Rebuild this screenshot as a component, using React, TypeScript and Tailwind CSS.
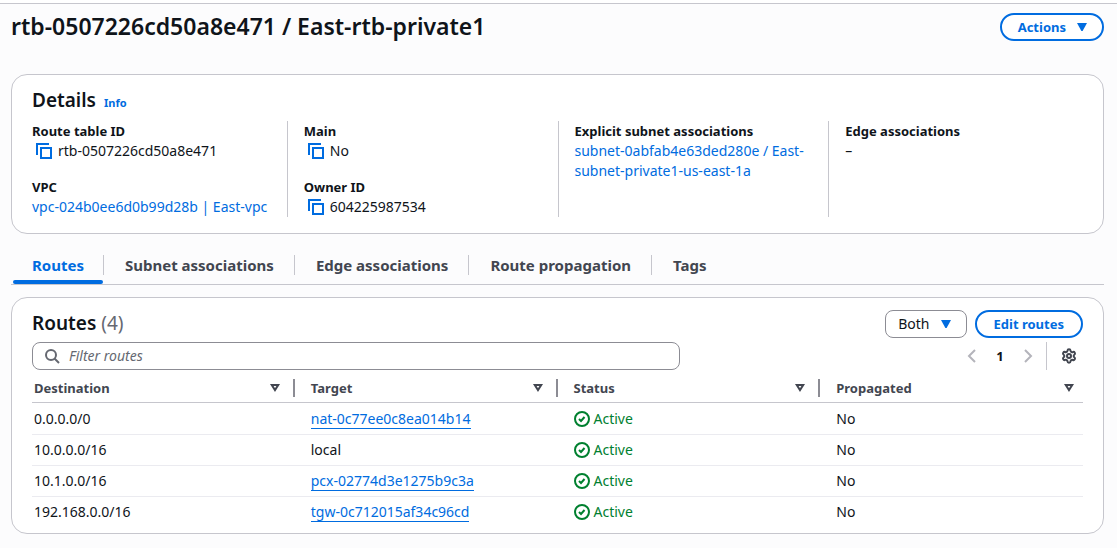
import React from "react";
import { Settings } from "lucide-react";

const detailLink = "text-[#006ce0] hover:underline";

function CopyIcon() {
  return (
    <svg viewBox="0 0 16 16" className="h-4 w-4 fill-none stroke-[#006ce0] stroke-2" aria-hidden="true">
      <path d="M15 5H5v10h10V5Z" />
      <path d="M13 1H1v11" />
    </svg>
  );
}

function CaretDown() {
  return (
    <svg viewBox="0 0 16 16" className="h-4 w-4 fill-[#006ce0]" aria-hidden="true">
      <path d="M3 4h10l-4.4 8H7.4L3 4Z" />
    </svg>
  );
}

function SortIcon() {
  return (
    <svg viewBox="0 0 16 16" className="block h-4 w-4 fill-none stroke-[#424650] stroke-2" aria-hidden="true">
      <path d="M4.8 5h6.4L8 10.1 4.8 5Z" />
    </svg>
  );
}

function StatusIcon() {
  return (
    <svg viewBox="0 0 16 16" className="h-4 w-4 fill-none stroke-[#00802f] stroke-2" aria-hidden="true">
      <circle cx="8" cy="8" r="7" />
      <path d="m5 8 2 2 3.521-4" />
    </svg>
  );
}

function SearchIcon() {
  return (
    <svg viewBox="0 0 16 16" className="h-4 w-4 shrink-0 fill-none stroke-[#656871] stroke-2" aria-hidden="true">
      <circle cx="7" cy="7" r="5" />
      <path d="m15 15-4.5-4.5" />
    </svg>
  );
}

function AngleIcon({ d }: { d: string }) {
  return (
    <svg viewBox="0 0 16 16" className="h-4 w-4 fill-none stroke-[#b4b4bb] stroke-2" aria-hidden="true">
      <path d={d} />
    </svg>
  );
}

function Copyable({ value }: { value: string }) {
  return (
    <span className="flex items-center gap-1.5 pl-1">
      <button type="button" aria-label={`Copy ${value}`}>
        <CopyIcon />
      </button>
      {value}
    </span>
  );
}

function Field({ label, children }: { label: string; children: React.ReactNode }) {
  return (
    <div>
      <dt className="text-[13px] leading-5 font-bold">{label}</dt>
      <dd>{children}</dd>
    </div>
  );
}

const tabs = ["Routes", "Subnet associations", "Edge associations", "Route propagation", "Tags"];
const columns = ["Destination", "Target", "Status", "Propagated"];
const routes = [
  { destination: "0.0.0.0/0", target: "nat-0c77ee0c8ea014b14", link: true },
  { destination: "10.0.0.0/16", target: "local", link: false },
  { destination: "10.1.0.0/16", target: "pcx-02774d3e1275b9c3a", link: true },
  { destination: "192.168.0.0/16", target: "tgw-0c712015af34c96cd", link: true },
];

export default function App() {
  return (
    <div className="min-h-screen bg-[#fcfcfd] font-['Noto_Sans',sans-serif] text-[14px] leading-5 text-[#0f141a]">
      <div className="h-1 border-b border-[#c6c6cd] bg-white" />
      <main className="pr-[13px] pb-3.5 pl-[11px]">
        <header className="flex items-start justify-between pt-2 pb-px">
          <h1 className="text-[23px] leading-7 font-semibold">rtb-0507226cd50a8e471 / East-rtb-private1</h1>
          <button type="button" className="mt-px flex h-7 items-center gap-2 rounded-full border-2 border-[#006ce0] bg-white pr-3 pl-4 text-[13px] font-bold text-[#006ce0]">
            Actions
            <CaretDown />
          </button>
        </header>

        <section className="mt-8 rounded-2xl border border-[#c6c6cd] bg-white px-5 pt-3.5 pb-4">
          <div className="flex items-baseline gap-2">
            <h2 className="text-[19px] leading-[22px] font-semibold">Details</h2>
            <a href="#info" className="text-[11px] leading-4 font-bold text-[#006ce0]">Info</a>
          </div>
          <dl className="-mx-4 mt-2.5 grid grid-cols-4">
            <div className="flex flex-col gap-4 px-4">
              <Field label="Route table ID"><Copyable value="rtb-0507226cd50a8e471" /></Field>
              <Field label="VPC"><a href="#vpc" className={detailLink}>vpc-024b0ee6d0b99d28b | East-vpc</a></Field>
            </div>
            <div className="flex flex-col gap-4 border-l border-[#c6c6cd] px-4">
              <Field label="Main"><Copyable value="No" /></Field>
              <Field label="Owner ID"><Copyable value="604225987534" /></Field>
            </div>
            <div className="border-l border-[#c6c6cd] px-4">
              <Field label="Explicit subnet associations">
                <a href="#subnet" className={detailLink}>subnet-0abfab4e63ded280e / East-subnet-private1-us-east-1a</a>
              </Field>
            </div>
            <div className="border-l border-[#c6c6cd] px-4">
              <Field label="Edge associations">–</Field>
            </div>
          </dl>
        </section>

        <nav role="tablist" className="mt-3 flex border-b border-[#c6c6cd] pl-0.5 text-[15px]">
          {tabs.map((tab, i) => (
            <button
              key={tab}
              type="button"
              role="tab"
              aria-selected={i === 0}
              className={
                i === 0
                  ? "relative flex h-[38px] items-center text-[#006ce0] after:absolute after:right-px after:bottom-0 after:left-0 after:h-1 after:rounded-sm after:bg-[#006ce0]"
                  : "flex h-[38px] items-center text-[#424650]"
              }
            >
              <span
                className={
                  i === 0
                    ? "border-r border-[#c6c6cd] px-[19px] font-bold"
                    : i < tabs.length - 1
                      ? "border-r border-[#c6c6cd] pr-5 pl-[21px] font-bold"
                      : "pr-5 pl-[21px] font-bold"
                }
              >
                {tab}
              </span>
            </button>
          ))}
        </nav>

        <section className="mt-3 rounded-2xl border border-[#c6c6cd] bg-white px-5 pt-3 pb-1.5">
          <div className="flex items-start justify-between">
            <h2 className="text-[19px] leading-[26px] font-semibold">
              Routes <span className="font-normal text-[#656871]">(4)</span>
            </h2>
            <div className="flex gap-2">
              <button type="button" className="flex h-7 items-center gap-2 rounded-lg border border-[#8c8c94] bg-white px-3">
                Both
                <CaretDown />
              </button>
              <button type="button" className="h-7 rounded-full border-2 border-[#006ce0] bg-white px-[17px] text-[13px] leading-6 font-bold text-[#006ce0]">
                Edit routes
              </button>
            </div>
          </div>
          <div className="mt-1 flex items-center justify-between gap-8">
            <label className="flex h-7 w-full max-w-[648px] items-center gap-[9px] rounded-lg border border-[#8c8c94] bg-white px-[11px]">
              <SearchIcon />
              <input type="search" aria-label="Filter routes" placeholder="Filter routes" className="w-full bg-transparent outline-none placeholder:text-[#656871] placeholder:italic" />
            </label>
            <div className="flex h-7 items-center">
              <button type="button" aria-label="Previous page"><AngleIcon d="M11 2 5 8l6 6" /></button>
              <button type="button" className="w-10 text-center text-[13px] font-bold">1</button>
              <button type="button" aria-label="Next page"><AngleIcon d="m5 2 6 6-6 6" /></button>
              <span className="ml-2.5 h-7 border-l border-[#c6c6cd]" />
              <button type="button" aria-label="Preferences" className="mr-1.5 ml-3.5">
                <Settings className="h-4 w-4 text-[#424650]" strokeWidth={3} aria-hidden="true" />
              </button>
            </div>
          </div>
          <table className="mt-1 w-full table-fixed border-collapse text-left">
            <thead>
              <tr className="h-7 border-b border-[#c6c6cd] text-[13px] text-[#424650]">
                {columns.map((column, i) => (
                  <th key={column} scope="col" className={i === 0 ? "p-0 pl-0.5 font-bold" : "p-0 pl-4 font-bold"}>
                    <div
                      className={
                        i < columns.length - 1
                          ? "flex h-[18px] items-center justify-between border-r-2 border-[#8c8c94] pr-2.5"
                          : "flex h-[18px] items-center justify-between pr-1.5"
                      }
                    >
                      {column}
                      <button type="button" aria-label={`Sort by ${column}`}><SortIcon /></button>
                    </div>
                  </th>
                ))}
              </tr>
            </thead>
            <tbody>
              {routes.map((route) => (
                <tr key={route.destination} className="h-[31px] border-b border-[#ebebf0] first:h-8 last:border-b-0 first:*:pt-px">
                  <td className="pl-0.5">{route.destination}</td>
                  <td className="pl-4">
                    {route.link ? (
                      <a href="#target" className="border-b border-[#006ce0] text-[#006ce0]">{route.target}</a>
                    ) : (
                      route.target
                    )}
                  </td>
                  <td className="pl-4">
                    <span className="flex items-center gap-1 text-[#00802f]">
                      <StatusIcon />
                      Active
                    </span>
                  </td>
                  <td className="pl-4">No</td>
                </tr>
              ))}
            </tbody>
          </table>
        </section>
      </main>
    </div>
  );
}
